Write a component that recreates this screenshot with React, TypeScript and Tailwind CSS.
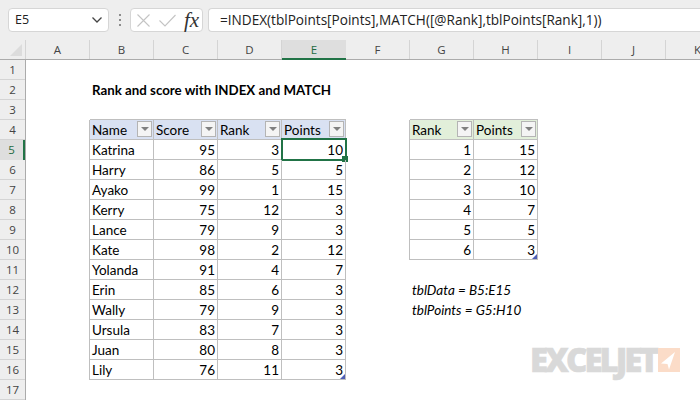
import React from "react";

const columns = ["A", "B", "C", "D", "E", "F", "G", "H", "I", "J", "K"];
const leftTable: [string, number, number, number][] = [
  ["Katrina", 95, 3, 10],
  ["Harry", 86, 5, 5],
  ["Ayako", 99, 1, 15],
  ["Kerry", 75, 12, 3],
  ["Lance", 79, 9, 3],
  ["Kate", 98, 2, 12],
  ["Yolanda", 91, 4, 7],
  ["Erin", 85, 6, 3],
  ["Wally", 79, 9, 3],
  ["Ursula", 83, 7, 3],
  ["Juan", 80, 8, 3],
  ["Lily", 76, 11, 3],
];
const rightTable = [
  [1, 15],
  [2, 12],
  [3, 10],
  [4, 7],
  [5, 5],
  [6, 3],
];

function Cell({ children, className = "" }: { children?: React.ReactNode; className?: string }) {
  return <div className={`relative h-5 w-16 shrink-0 overflow-visible whitespace-nowrap px-[2px] leading-[21px] ${className}`}>{children}</div>;
}

function HeaderCell({ label, green }: { label: string; green?: boolean }) {
  return (
    <Cell className={`border-r border-b border-[#bfbfbf] ${green ? "bg-[#e2efda]" : "bg-[#d9e1f2]"}`}>
      {label}
      <span className="absolute right-[1px] top-[1px] flex h-4 w-[15px] items-center justify-center border border-[#b4b4b4] bg-[#f4f4f4]">
        <span className="h-0 w-0 border-x-[4px] border-t-[4px] border-x-transparent border-t-[#808080]" />
      </span>
    </Cell>
  );
}

const body = "border-r border-b border-[#bfbfbf]";
const num = "text-right";

function Handle() {
  return <span className="absolute bottom-0 right-0 h-0 w-0 border-b-[5px] border-l-[5px] border-b-[#4f5fb5] border-l-transparent" />;
}

function rowCells(row: number) {
  const cells: React.ReactNode[] = [];
  const li = row - 5;
  const ri = row - 5;
  cells.push(<Cell key="A" className={row >= 4 && row <= 16 ? "border-r border-[#bfbfbf]" : ""} />);
  if (row === 4) {
    cells.push(<HeaderCell key="B" label="Name" />, <HeaderCell key="C" label="Score" />, <HeaderCell key="D" label="Rank" />, <HeaderCell key="E" label="Points" />);
  } else if (row >= 5 && row <= 16) {
    const [n, s, r, p] = leftTable[li];
    cells.push(
      <Cell key="B" className={body}>{n}</Cell>,
      <Cell key="C" className={`${body} ${num}`}>{s}</Cell>,
      <Cell key="D" className={`${body} ${num}`}>{r}</Cell>,
      <Cell key="E" className={`${body} ${num}`}>
        {p}
        {row === 16 && <Handle />}
        {row === 5 && (
          <>
            <span className="absolute -left-[1px] -top-[2px] h-[23px] w-[66px] border-2 border-[#217346]" />
            <span className="absolute -bottom-[3px] -right-[3px] h-[6px] w-[6px] bg-[#217346]" />
          </>
        )}
      </Cell>
    );
  } else if (row === 2) {
    cells.push(
      <Cell key="B" className="text-[13.3px] font-bold">Rank and score with INDEX and MATCH</Cell>,
      <Cell key="C" />, <Cell key="D" />, <Cell key="E" />
    );
  } else if (row === 3) {
    cells.push(<Cell key="B" className="border-b border-[#bfbfbf]" />, <Cell key="C" className="border-b border-[#bfbfbf]" />, <Cell key="D" className="border-b border-[#bfbfbf]" />, <Cell key="E" className="border-b border-[#bfbfbf]" />);
  } else {
    cells.push(<Cell key="B" />, <Cell key="C" />, <Cell key="D" />, <Cell key="E" />);
  }
  cells.push(<Cell key="F" className={row >= 4 && row <= 10 ? "border-r border-[#bfbfbf]" : ""} />);
  if (row === 4) {
    cells.push(<HeaderCell key="G" label="Rank" green />, <HeaderCell key="H" label="Points" green />);
  } else if (row >= 5 && row <= 10) {
    const [r, p] = rightTable[ri];
    cells.push(
      <Cell key="G" className={`${body} ${num}`}>{r}</Cell>,
      <Cell key="H" className={`${body} ${num}`}>
        {p}
        {row === 10 && <Handle />}
      </Cell>
    );
  } else if (row === 3) {
    cells.push(<Cell key="G" className="border-b border-[#bfbfbf]" />, <Cell key="H" className="border-b border-[#bfbfbf]" />);
  } else if (row === 12) {
    cells.push(<Cell key="G" className="italic">tblData = B5:E15</Cell>, <Cell key="H" />);
  } else if (row === 13) {
    cells.push(<Cell key="G" className="italic">tblPoints = G5:H10</Cell>, <Cell key="H" />);
  } else {
    cells.push(<Cell key="G" />, <Cell key="H" />);
  }
  return cells;
}

export default function App() {
  const rows = Array.from({ length: 17 }, (_, i) => i + 1);
  return (
    <div className="relative h-[400px] w-[700px] overflow-hidden bg-white font-['Lato','Carlito','Liberation_Sans',sans-serif] text-[13.5px] text-black">
      {/* Formula bar */}
      <div className="flex h-10 items-start gap-[5px] bg-[#eeeeee] pl-2 pt-2">
        <div className="flex h-6 w-[101px] shrink-0 items-center justify-between rounded-[4px] border border-[#d6d6d6] bg-white pl-[6px] pr-[5px] font-['Open_Sans',sans-serif] text-[12.5px] text-[#222]">
          <span>E5</span>
          <svg width="12" height="8" viewBox="0 0 12 8" fill="none" stroke="#444" strokeWidth="1.3"><path d="M1.5 1.5 6 6l4.5-4.5" /></svg>
        </div>
        <div className="flex h-6 w-[11px] shrink-0 flex-col items-center justify-center gap-[3px]">
          <span className="h-[2px] w-[2px] bg-[#8c8c8c]" />
          <span className="h-[2px] w-[2px] bg-[#8c8c8c]" />
          <span className="h-[2px] w-[2px] bg-[#8c8c8c]" />
        </div>
        <div className="flex h-6 w-[73px] shrink-0 items-center rounded-[4px] border border-[#d6d6d6] bg-white pl-[6px]">
          <svg width="13" height="13" viewBox="0 0 13 13" fill="none" stroke="#c4c4c4" strokeWidth="1.1"><path d="M.5.5l12 12M12.5.5l-12 12" /></svg>
          <svg className="ml-[9px]" width="17" height="13" viewBox="0 0 17 13" fill="none" stroke="#c4c4c4" strokeWidth="1.1"><path d="M.5 6.5l5.5 5.5L16.5 1" /></svg>
          <span className="ml-[8px] font-['Liberation_Serif',serif] text-[21px] italic leading-none text-[#333]">fx</span>
        </div>
        <div className="flex h-6 flex-1 items-center rounded-l-[4px] border-y border-l border-[#d6d6d6] bg-white pl-[11px] font-['Open_Sans',sans-serif] text-[13.6px] text-[#222]">
          =INDEX(tblPoints[Points],MATCH([@Rank],tblPoints[Rank],1))
        </div>
      </div>

      {/* Column headers */}
      <div className="flex h-5 border-b border-[#ababab] bg-[#eeeeee] font-['Open_Sans',sans-serif] text-[11.5px] leading-[19px] text-[#444]">
        <div className="relative w-[26px] shrink-0 border-r border-[#d4d4d4]">
          <span className="absolute bottom-[3px] right-[3px] h-0 w-0 border-b-[12px] border-l-[12px] border-b-[#dcdcdc] border-l-transparent" />
        </div>
        {columns.map((c) =>
          c === "E" ? (
            <div key={c} className="h-5 w-16 shrink-0 border-b-2 border-[#217346] bg-[#dedede] text-center text-[#1e6b41]">{c}</div>
          ) : (
            <div key={c} className="w-16 shrink-0 border-r border-[#d4d4d4] text-center">{c}</div>
          )
        )}
      </div>

      {/* Sheet */}
      <div className="flex">
        <div className="w-[26px] shrink-0 border-r border-[#ababab] bg-[#eeeeee] font-['Open_Sans',sans-serif] text-[11.5px] leading-[19px] text-[#444]">
          {rows.map((r) =>
            r === 5 ? (
              <div key={r} className="h-5 border-r-2 border-[#217346] bg-[#dedede] text-center text-[#1e6b41]">{r}</div>
            ) : (
              <div key={r} className="h-5 border-b border-[#d4d4d4] text-center">{r}</div>
            )
          )}
        </div>
        <div className="flex flex-col">
          {rows.map((r) => (
            <div key={r} className="flex">{rowCells(r)}</div>
          ))}
        </div>
      </div>

      {/* Watermark logo */}
      <div className="absolute left-[530px] top-[341px] flex items-start gap-[2px]">
        <span className="font-['Open_Sans',sans-serif] text-[33px] font-extrabold leading-[38px] tracking-[-3px] text-[#d9d9d9] [-webkit-text-stroke:0.6px_#d9d9d9]">EXCELJET</span>
        <svg className="mt-[7px]" width="22" height="24" viewBox="0 0 22 24">
          <rect width="22" height="24" fill="#fbdcc8" />
          <path d="M17 4 3 15.5l6.5.5 1.5 5.5z" fill="#fff" />
        </svg>
      </div>
    </div>
  );
}
